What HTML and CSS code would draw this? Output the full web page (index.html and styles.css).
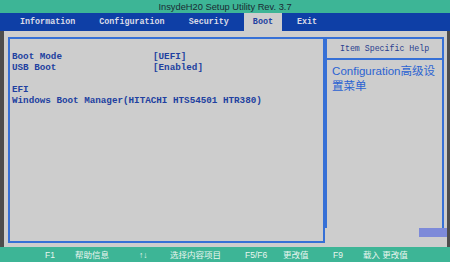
FILE: index.html
```html
<!DOCTYPE html>
<html lang="zh-CN">
<head>
    <meta charset="UTF-8">
    <meta name="viewport" content="width=device-width, initial-scale=1.0">
    <title>InsydeH20 Setup Utility</title>
    <link rel="stylesheet" href="styles.css">
</head>
<body>
    <div class="screen">
        <div class="title-bar">InsydeH20 Setup Utility Rev. 3.7</div>

        <div class="menu-bar">
            <span class="menu-item">Information</span>
            <span class="menu-item">Configuration</span>
            <span class="menu-item">Security</span>
            <span class="menu-item active">Boot</span>
            <span class="menu-item">Exit</span>
        </div>

        <div class="main">
            <div class="settings-panel">
                <div class="setting-row">
                    <span class="setting-label">Boot Mode</span>
                    <span class="setting-value">[UEFI]</span>
                </div>
                <div class="setting-row">
                    <span class="setting-label">USB Boot</span>
                    <span class="setting-value">[Enabled]</span>
                </div>
                <div class="setting-group">
                    <div class="setting-line">EFI</div>
                    <div class="setting-line">Windows Boot Manager(HITACHI HTS54501 HTR380)</div>
                </div>
            </div>

            <div class="help-panel">
                <div class="help-box">
                    <div class="help-title">Item Specific Help</div>
                    <div class="help-text">Configuration高级设置菜单</div>
                </div>
                <div class="help-foot">
                    <span class="scroll-block"></span>
                </div>
            </div>
        </div>

        <div class="key-bar">
            <span>F1</span>
            <span>帮助信息</span>
            <span class="arrows">↑↓</span>
            <span>选择内容项目</span>
            <span>F5/F6</span>
            <span>更改值</span>
            <span>F9</span>
            <span>载入 更改值</span>
        </div>
    </div>
</body>
</html>
```

FILE: styles.css
```css
:root {
    --teal: #3db596;
    --menu-blue: #0e3fa6;
    --panel-grey: #cdcdcd;
    --line-blue: #3670d6;
    --text-blue: #2140a0;
    --help-blue: #2b63d2;
    --edge: #4d4d4d;
}

body {
    margin: 0;
    background-color: var(--panel-grey);
}

.screen {
    width: 450px;
    height: 262px;
    display: flex;
    flex-direction: column;
    overflow: hidden;
}

.title-bar {
    height: 13px;
    background-color: var(--teal);
    color: #1b2a33;
    font-family: 'Liberation Sans', Arial, sans-serif;
    font-size: 9.3px;
    line-height: 14px;
    text-align: center;
}

.menu-bar {
    height: 18px;
    display: flex;
    gap: 6px;
    padding-left: 11px;
    background-color: var(--menu-blue);
    font-family: 'Liberation Mono', monospace;
    font-weight: bold;
    font-size: 8.4px;
    line-height: 18px;
    color: #d9dbe6;
}

.menu-item {
    padding: 0 9px;
}

.menu-item.active {
    background-color: var(--panel-grey);
    color: var(--text-blue);
}

.main {
    flex: 1;
    display: flex;
    align-items: flex-start;
    padding: 6px 3px 4px 4px;
    border-left: 4px solid var(--edge);
    border-right: 3px solid var(--edge);
    background-color: var(--panel-grey);
}

.settings-panel {
    width: 314px;
    height: 190px;
    border: 2px solid var(--line-blue);
    padding: 12px 0 0 2px;
    font-family: 'Liberation Mono', monospace;
    font-weight: bold;
    font-size: 9.25px;
    line-height: 11px;
    color: var(--text-blue);
}

.setting-row {
    display: grid;
    grid-template-columns: 141px 1fr;
}

.setting-group {
    margin-top: 11px;
}

.help-panel {
    width: 120px;
    height: 200px;
    display: flex;
    flex-direction: column;
}

.help-box {
    flex: 1;
    border: 2px solid var(--line-blue);
    border-bottom: none;
}

.help-title {
    height: 19px;
    border-bottom: 2px solid var(--line-blue);
    font-family: 'Liberation Mono', monospace;
    font-size: 8.25px;
    line-height: 19px;
    text-align: center;
    color: #2a3f8f;
}

.help-text {
    padding: 4px 4px 0 5px;
    font-family: 'Liberation Sans', 'Noto Sans CJK SC', sans-serif;
    font-size: 11.5px;
    line-height: 15px;
    color: var(--help-blue);
}

.help-foot {
    height: 9px;
    display: flex;
    justify-content: flex-end;
    margin-right: -3px;
}

.scroll-block {
    width: 28px;
    background-color: #7d8ad9;
}

.key-bar {
    height: 15px;
    display: grid;
    grid-template-columns: 30px 64px 31px 75px 38px 50px 30px auto;
    padding-left: 45px;
    background-color: var(--teal);
    font-family: 'Liberation Sans', 'Noto Sans CJK SC', sans-serif;
    font-size: 8.5px;
    line-height: 16px;
    color: #eaf5f0;
}

.key-bar .arrows {
    font-weight: bold;
}
```
